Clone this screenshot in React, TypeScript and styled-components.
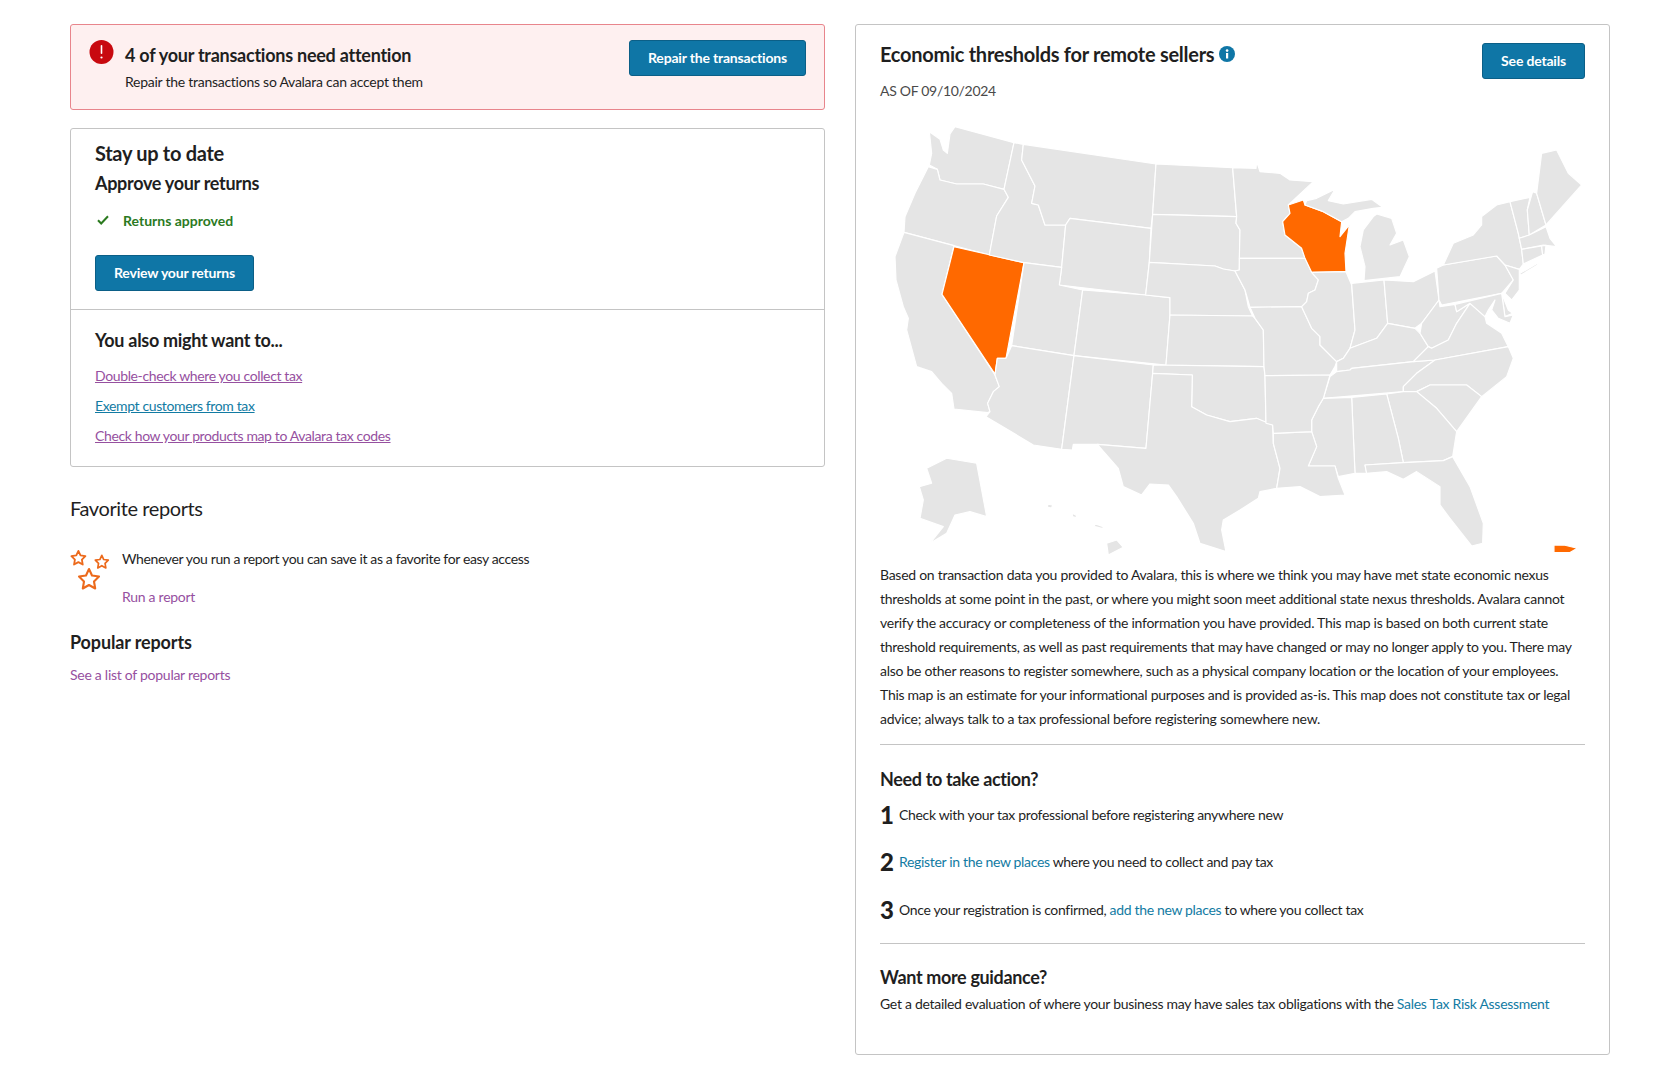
import styled, { createGlobalStyle } from "styled-components";

const GlobalStyle = createGlobalStyle`
  html, body { margin: 0; padding: 0; background: #fff; }
  body { font-family: "Lato", "Noto Sans", sans-serif; color: #1f1f1f; font-size: 14px; }
  * { box-sizing: border-box; }
`;

const colors = {
  button: "#0f76a6",
  buttonBorder: "#0b5f87",
  link: "#127ba3",
  visited: "#96509f",
  line: "#c4c4c4",
  land: "#e5e5e5",
  hot: "#ff6900",
};

const Page = styled.div`
  display: grid;
  grid-template-columns: 755px 755px;
  gap: 30px;
  padding: 24px 70px 23px;
  align-items: start;
`;

const Column = styled.div`
  display: flex;
  flex-direction: column;
`;

const Alert = styled.div`
  height: 86px;
  display: flex;
  justify-content: space-between;
  padding: 15px 18px 0 18px;
  background: #fef0f0;
  border: 1px solid #e8858c;
  border-radius: 3px;
`;

const AlertBody = styled.div`
  display: flex;
  gap: 11px;
`;

const AlertTitle = styled.div`
  font-size: 18px;
  line-height: 30px;
  font-weight: 700;
  letter-spacing: -0.25px;
`;

const AlertText = styled.div`
  line-height: 24px;
  letter-spacing: -0.26px;
`;

const Button = styled.button`
  height: 36px;
  padding: 0 18px 2px;
  background: ${colors.button};
  border: 1px solid ${colors.buttonBorder};
  border-radius: 3px;
  color: #fff;
  font-family: inherit;
  font-size: 14px;
  font-weight: 700;
  letter-spacing: -0.18px;
  cursor: pointer;
`;

const Card = styled.div`
  margin-top: 18px;
  border: 1px solid ${colors.line};
  border-radius: 3px;
`;

const CardSection = styled.div<{ $divided?: boolean }>`
  padding: ${(p) => (p.$divided ? "15px 24px 15px" : "9px 24px 18px")};
  border-top: ${(p) => (p.$divided ? `1px solid ${colors.line}` : "none")};
`;

const CardTitle = styled.div`
  font-size: 20px;
  line-height: 30px;
  font-weight: 700;
  letter-spacing: -0.3px;
`;

const SubTitle = styled.div`
  font-size: 18px;
  line-height: 30px;
  font-weight: 700;
  letter-spacing: -0.3px;
`;

const Approved = styled.div`
  display: flex;
  align-items: center;
  gap: 14px;
  margin: 7px 0 0 2px;
  height: 30px;
  color: #2b7a1f;
  font-weight: 700;
`;

const ReviewButton = styled(Button)`
  display: block;
  margin-top: 20px;
`;

const LinkList = styled.div`
  display: flex;
  flex-direction: column;
  margin-top: 6px;
`;

const CardLink = styled.a<{ $visited?: boolean }>`
  line-height: 30px;
  color: ${(p) => (p.$visited ? colors.visited : colors.link)};
  text-decoration: underline;
  letter-spacing: -0.37px;
  cursor: pointer;
`;

const Favorites = styled.section`
  margin-top: 26px;
`;

const FavoritesTitle = styled.div`
  font-size: 20px;
  line-height: 30px;
  letter-spacing: -0.4px;
`;

const FavoriteRow = styled.div`
  display: flex;
  gap: 12px;
  margin-top: 24px;
`;

const FavoriteText = styled.div`
  line-height: 24px;
  letter-spacing: -0.37px;
`;

const PlainLink = styled.a<{ $visited?: boolean }>`
  color: ${(p) => (p.$visited ? colors.visited : colors.link)};
  letter-spacing: -0.27px;
  cursor: pointer;
`;

const RunLink = styled(PlainLink)`
  display: block;
  margin-top: 14px;
  line-height: 24px;
`;

const PopularTitle = styled.div`
  margin-top: 18px;
  font-size: 18px;
  line-height: 30px;
  font-weight: 700;
  letter-spacing: -0.13px;
`;

const PopularLink = styled(PlainLink)`
  display: block;
  margin-top: 6px;
  line-height: 24px;
`;

const Panel = styled.div`
  height: 1031px;
  padding: 14px 24px 0;
  border: 1px solid ${colors.line};
  border-radius: 3px;
`;

const PanelHeader = styled.div`
  display: flex;
  justify-content: space-between;
  align-items: flex-start;
`;

const PanelTitle = styled.div`
  display: flex;
  align-items: center;
  gap: 5px;
  font-size: 20px;
  line-height: 30px;
  font-weight: 700;
  letter-spacing: -0.27px;
`;

const AsOf = styled.div`
  margin-top: 10px;
  line-height: 24px;
  font-size: 14px;
  color: #4a4a4a;
  letter-spacing: -0.3px;
`;

const HeaderButton = styled(Button)`
  margin-top: 4px;
`;

const MapFrame = styled.svg`
  display: block;
  width: 705px;
  height: 450px;
  margin-top: 10px;
`;

const Disclaimer = styled.p`
  margin: 0;
  line-height: 24px;
  letter-spacing: -0.27px;
`;

const Rule = styled.hr<{ $gap: number }>`
  margin: ${(p) => p.$gap}px 0 0;
  border: none;
  border-top: 1px solid ${colors.line};
`;

const SectionTitle = styled.div<{ $gap: number }>`
  margin-top: ${(p) => p.$gap}px;
  font-size: 18px;
  line-height: 30px;
  font-weight: 700;
  letter-spacing: -0.35px;
`;

const Step = styled.div`
  display: flex;
  align-items: center;
  gap: 6px;
  height: 30px;
  margin-top: 17.5px;
  letter-spacing: -0.33px;
  &:first-of-type {
    margin-top: 5px;
  }
`;

const StepNumber = styled.span`
  width: 13px;
  font-size: 24px;
  font-weight: 900;
`;

const Steps = styled.div`
  display: flex;
  flex-direction: column;
`;

const InlineLink = styled.a`
  color: ${colors.link};
  cursor: pointer;
`;

const GuidanceText = styled.div`
  line-height: 24px;
  letter-spacing: -0.29px;
`;

type Shape = { points: string; hot?: boolean };

// traced off the reference, west half is one coordinate space, east half another
const westStates: Shape[] = [
  { points: "208,65 240,88 250,120 262,130 270,72 285,50 462,98 432,238 370,222 290,222 240,210 232,178 208,165 215,130" },
  { points: "205,170 232,178 240,210 290,222 370,222 432,238 445,262 410,318 388,435 132,367 135,320 165,250" },
  { points: "132,367 282,407 246,553 405,795 418,830 400,845 383,880 390,905 383,908 282,897 275,850 245,820 215,785 170,770 140,660 145,625 130,590 108,510 105,440" },
  { points: "282,410 492,458 438,745 412,745 405,792 246,553", hot: true },
  { points: "462,98 490,103 485,150 525,228 515,280 535,285 555,345 617,345 605,472 492,458 388,435 410,318 445,262 432,238" },
  { points: "490,103 888,162 878,313 873,355 630,325 617,345 555,345 535,285 515,280 525,228 485,150" },
  { points: "630,325 873,355 868,457 857,555 598,525 605,472 617,345" },
  { points: "492,458 605,472 598,525 668,540 642,737 455,707" },
  { points: "668,540 857,555 930,563 930,615 918,765 642,737" },
  { points: "455,707 642,737 605,1018 520,1005 378,920 390,905 383,880 400,845 418,830 405,795 412,745 438,745" },
  { points: "642,737 880,765 878,790 858,1015 712,1003 640,1003 637,1020 605,1018" },
  { points: "888,162 1118,173 1130,320 878,313" },
  { points: "878,313 1130,320 1128,340 1140,360 1138,480 1125,483 1090,477 1065,468 868,457" },
  { points: "868,457 1065,468 1090,477 1125,483 1155,540 1165,590 1178,618 930,615 930,563 857,555" },
  { points: "930,615 1178,618 1185,625 1210,660 1212,770 918,765" },
  { points: "880,765 1212,770 1215,797 1218,940 1190,925 1110,935 1040,915 995,890 997,795 878,790" },
  { points: "878,790 997,795 995,890 1040,915 1110,935 1190,925 1238,945 1240,1000 1260,1075 1250,1135 1200,1145 1195,1165 1140,1200 1090,1230 1085,1260 1098,1325 1020,1300 1000,1240 950,1160 925,1125 870,1122 845,1155 790,1130 775,1075 712,1003 858,1015" },
  { points: "200,1075 260,1045 350,1060 380,1220 330,1205 285,1215 260,1270 210,1300 250,1250 180,1225 190,1170 178,1130 215,1120" },
  { points: "740,1300 770,1290 790,1312 745,1335" },
  { points: "563,1183 578,1185 575,1194 563,1192" },
  { points: "636,1210 648,1215 650,1224 638,1220" },
  { points: "700,1240 730,1250 728,1256 705,1250" },
];

const eastStates: Shape[] = [
  { points: "-22,173 48,175 50,155 60,185 120,190 150,210 220,215 145,285 150,310 128,335 135,375 185,415 195,445 -2,445 0,360 -12,340 -10,320" },
  { points: "-2,445 195,445 215,487 235,510 225,540 205,550 200,575 185,590 30,592 15,540 -15,483 -2,480" },
  { points: "30,592 185,590 215,655 240,680 240,705 280,745 290,755 285,770 270,795 75,797 72,770 70,660 45,625" },
  { points: "145,285 190,270 195,285 250,305 305,335 300,380 328,345 315,430 318,485 215,487 195,445 185,415 135,375 128,335 150,310", hot: true },
  { points: "200,272 230,265 285,238 265,272 310,282 395,268 428,292 400,295 345,305 325,325 305,335 250,305 195,285" },
  { points: "410,312 455,325 470,370 450,405 490,390 508,440 480,500 372,512 375,470 360,410 370,360 400,320" },
  { points: "215,487 318,485 335,525 345,660 330,715 310,745 290,755 280,745 240,705 240,680 215,655 185,590 200,575 205,550 225,540 235,510" },
  { points: "335,520 432,510 443,640 410,685 330,715 345,660" },
  { points: "432,510 520,515 585,483 597,570 545,640 525,655 443,640" },
  { points: "443,640 525,655 540,670 565,710 520,755 335,775 330,780 290,785 290,755 310,745 330,715 410,685" },
  { points: "290,785 330,780 335,775 520,755 585,750 530,790 490,830 490,845 250,865 270,800" },
  { points: "597,570 600,590 645,583 650,605 690,580 650,640 625,690 575,715 565,710 540,670 545,640" },
  { points: "520,755 565,710 575,715 625,690 650,640 690,580 735,620 740,640 785,670 805,710 585,750" },
  { points: "585,750 805,710 820,745 800,800 725,860 680,825 625,825 570,825 530,845 490,845 490,830 530,790" },
  { points: "530,845 570,825 625,825 680,825 725,860 650,965 590,895" },
  { points: "440,852 490,845 530,845 590,895 650,965 638,1040 610,1052 490,1058 475,985" },
  { points: "335,862 440,852 475,985 490,1058 375,1065 380,1090 345,1090" },
  { points: "250,865 335,862 345,1090 295,1100 285,1068 205,1068 230,1010 215,965 215,930 235,890" },
  { points: "100,970 215,965 230,1010 205,1068 285,1068 295,1105 315,1155 240,1160 180,1130 110,1135 120,1075 100,1000" },
  { points: "75,797 270,795 250,865 235,890 215,930 215,965 100,970 98,945 78,940" },
  { points: "375,1065 490,1058 610,1052 638,1040 690,1130 730,1240 728,1300 695,1308 630,1225 600,1185 600,1130 530,1085 490,1108 440,1085 380,1090" },
  { points: "590,475 610,465 770,438 795,465 820,510 785,550 605,585 597,570" },
  { points: "610,465 640,400 700,375 725,345 725,320 770,285 810,275 835,370 838,385 845,418 850,462 838,478 795,465 770,438" },
  { points: "840,490 895,458 893,465 842,496" },
  { points: "795,465 838,478 838,540 815,570 795,550 820,510" },
  { points: "810,275 870,262 862,300 868,375 838,385 835,370" },
  { points: "878,245 890,250 918,345 868,375 862,300" },
  { points: "890,250 905,130 950,120 985,190 1025,225 918,345" },
  { points: "838,385 868,375 918,350 930,385 950,410 910,405 845,418" },
  { points: "845,418 905,408 908,435 850,462" },
  { points: "905,408 918,406 915,432 908,435" },
  { points: "785,550 805,600 818,610 795,620" },
  { points: "645,583 785,550 795,620 820,615 810,640 775,625 755,600 765,570 745,600 735,620 690,580 650,605" },
  { points: "942,1305 975,1306 1012,1315 990,1328 942,1328", hot: true },
];

const StateShape = styled.polygon<{ $hot?: boolean }>`
  fill: ${(p) => (p.$hot ? colors.hot : colors.land)};
  stroke: #fff;
  stroke-width: 3.5;
  stroke-linejoin: round;
`;

const UsMap = () => (
  <MapFrame viewBox="880 113 705 450">
    <g transform="translate(860 110) scale(0.3333)">
      {westStates.map((s) => (
        <StateShape key={s.points} points={s.points} $hot={s.hot} />
      ))}
    </g>
    <g transform="translate(1240 110) scale(0.3333)">
      {eastStates.map((s) => (
        <StateShape key={s.points} points={s.points} $hot={s.hot} />
      ))}
    </g>
  </MapFrame>
);

const AlertIcon = () => (
  <svg width="25" height="24" viewBox="0 0 25 24">
    <circle cx="12.5" cy="12" r="12" fill="#c8090f" />
    <rect x="11.7" y="5" width="1.6" height="9" rx="0.8" fill="#fff" />
    <circle cx="12.5" cy="17.5" r="1.1" fill="#fff" />
  </svg>
);

const CheckIcon = () => (
  <svg width="12" height="10" viewBox="0 0 12 10">
    <path d="M1 5.2 4.2 8.5 11 1.2" fill="none" stroke="#2b7a1f" strokeWidth="2" />
  </svg>
);

const InfoIcon = () => (
  <svg width="16" height="16" viewBox="0 0 16 16">
    <circle cx="8" cy="8" r="8" fill="#0f76a6" />
    <rect x="7" y="7" width="2.2" height="5.5" fill="#fff" />
    <circle cx="8.1" cy="4.6" r="1.3" fill="#fff" />
  </svg>
);

const starPath =
  "M12 2 15 8.5 22 9.5 17 14.5 18.2 21.5 12 18 5.8 21.5 7 14.5 2 9.5 9 8.5Z";

const StarsIcon = () => (
  <svg width="40" height="46" viewBox="0 0 40 46" fill="none" stroke="#ec6a1c" strokeWidth="2.6" strokeLinejoin="round">
    <path d={starPath} transform="translate(0 2.5) scale(0.7)" />
    <path d={starPath} transform="translate(24 7) scale(0.65)" />
    <path d={starPath} transform="translate(7 20) scale(1)" strokeWidth="2.1" />
  </svg>
);

export default function App() {
  return (
    <>
      <GlobalStyle />
      <Page>
        <Column>
          <Alert>
            <AlertBody>
              <AlertIcon />
              <div>
                <AlertTitle>4 of your transactions need attention</AlertTitle>
                <AlertText>Repair the transactions so Avalara can accept them</AlertText>
              </div>
            </AlertBody>
            <Button>Repair the transactions</Button>
          </Alert>

          <Card>
            <CardSection>
              <CardTitle>Stay up to date</CardTitle>
              <SubTitle>Approve your returns</SubTitle>
              <Approved>
                <CheckIcon />
                Returns approved
              </Approved>
              <ReviewButton>Review your returns</ReviewButton>
            </CardSection>
            <CardSection $divided>
              <SubTitle>You also might want to...</SubTitle>
              <LinkList>
                <CardLink $visited>Double-check where you collect tax</CardLink>
                <CardLink>Exempt customers from tax</CardLink>
                <CardLink $visited>Check how your products map to Avalara tax codes</CardLink>
              </LinkList>
            </CardSection>
          </Card>

          <Favorites>
            <FavoritesTitle>Favorite reports</FavoritesTitle>
            <FavoriteRow>
              <StarsIcon />
              <div>
                <FavoriteText>Whenever you run a report you can save it as a favorite for easy access</FavoriteText>
                <RunLink $visited>Run a report</RunLink>
              </div>
            </FavoriteRow>
            <PopularTitle>Popular reports</PopularTitle>
            <PopularLink $visited>See a list of popular reports</PopularLink>
          </Favorites>
        </Column>

        <Panel>
          <PanelHeader>
            <div>
              <PanelTitle>
                Economic thresholds for remote sellers <InfoIcon />
              </PanelTitle>
              <AsOf>AS OF 09/10/2024</AsOf>
            </div>
            <HeaderButton>See details</HeaderButton>
          </PanelHeader>

          <UsMap />

          <Disclaimer>
            Based on transaction data you provided to Avalara, this is where we think you may have met state economic nexus
            thresholds at some point in the past, or where you might soon meet additional state nexus thresholds. Avalara cannot
            verify the accuracy or completeness of the information you have provided. This map is based on both current state
            threshold requirements, as well as past requirements that may have changed or may no longer apply to you. There may
            also be other reasons to register somewhere, such as a physical company location or the location of your employees.
            This map is an estimate for your informational purposes and is provided as-is. This map does not constitute tax or legal
            advice; always talk to a tax professional before registering somewhere new.
          </Disclaimer>
          <Rule $gap={13} />

          <SectionTitle $gap={19}>Need to take action?</SectionTitle>
          <Steps>
            <Step>
              <StepNumber>1</StepNumber>
              <span>Check with your tax professional before registering anywhere new</span>
            </Step>
            <Step>
              <StepNumber>2</StepNumber>
              <span>
                <InlineLink>Register in the new places</InlineLink> where you need to collect and pay tax
              </span>
            </Step>
            <Step>
              <StepNumber>3</StepNumber>
              <span>
                Once your registration is confirmed, <InlineLink>add the new places</InlineLink> to where you collect tax
              </span>
            </Step>
          </Steps>
          <Rule $gap={19} />

          <SectionTitle $gap={18}>Want more guidance?</SectionTitle>
          <GuidanceText>
            Get a detailed evaluation of where your business may have sales tax obligations with the{" "}
            <InlineLink>Sales Tax Risk Assessment</InlineLink>
          </GuidanceText>
        </Panel>
      </Page>
    </>
  );
}
